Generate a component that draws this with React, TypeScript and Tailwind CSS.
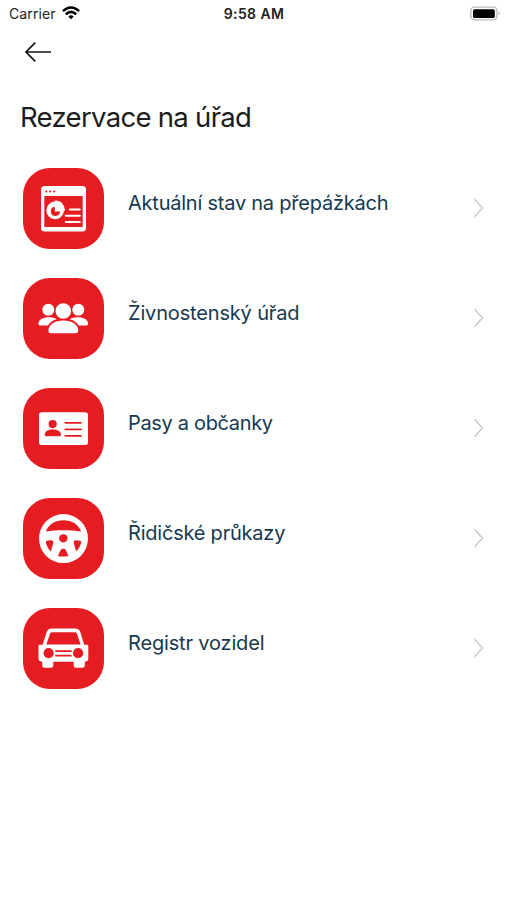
import React from 'react';

const WindowIcon = () => (
  <>
    <rect x="18" y="18" width="45" height="45.5" rx="3.5" fill="#fff" />
    <rect x="21.3" y="28" width="38.4" height="31" fill="#e51d23" />
    <g fill="#e51d23">
      <circle cx="23.2" cy="23.5" r="1.1" />
      <circle cx="27.2" cy="23.5" r="1.1" />
      <circle cx="31.2" cy="23.5" r="1.1" />
    </g>
    <path d="M31.6 33.6 Q31.8 32.4 33 32.5 Q36.5 33 38.5 34.5 Q41.3 37.5 41.9 41.5 Q42 43 40.9 43.2 A8.8 8.8 0 1 1 31.6 33.6 Z" fill="#fff" />
    <path d="M31.8 38.8 V43.6 H37 A4.6 4.6 0 1 1 31.8 38.8 Z" fill="#e51d23" />
    <path d="M46.8 41.5 H56.8 M42.8 47.8 H56.8 M42.8 54 H56.8" stroke="#fff" strokeWidth="2" strokeLinecap="round" />
  </>
);

const PeopleIcon = () => (
  <g fill="#fff">
    <circle cx="25.3" cy="31.8" r="6" />
    <circle cx="55.3" cy="31.8" r="6" />
    <path d="M15.4 45.5 C15.6 41.5 20 39.2 25.5 39.2 C29 39.2 31.8 39.8 33.8 41.2 C29.5 42.3 26.5 44.5 25 47.4 H17 Q15.4 47.4 15.4 45.5 Z" />
    <path d="M65.2 45.5 C65 41.5 60.6 39.2 55.1 39.2 C51.6 39.2 48.8 39.8 46.8 41.2 C51.1 42.3 54.1 44.5 55.6 47.4 H63.6 Q65.2 47.4 65.2 45.5 Z" />
    <circle cx="40.3" cy="33" r="7.8" />
    <path d="M25.4 52.8 C25.4 46.5 32 42.5 40.3 42.5 S55.2 46.5 55.2 52.8 Q55.2 55.3 52.8 55.3 H27.8 Q25.4 55.3 25.4 52.8 Z" />
  </g>
);

const CardIcon = () => (
  <>
    <rect x="16" y="24.3" width="49" height="32.7" rx="2.8" fill="#fff" />
    <g fill="#e51d23">
      <circle cx="29.7" cy="36.1" r="4.1" />
      <path d="M21.7 46.8 C21.7 43.2 25.3 41.4 29.8 41.4 S38 43.2 38 46.8 Q38 48.2 36.6 48.2 H23.1 Q21.7 48.2 21.7 46.8 Z" />
    </g>
    <path d="M42.3 34.8 H58 M42.3 41.4 H58 M42.3 47.9 H58" stroke="#e51d23" strokeWidth="1.7" strokeLinecap="round" />
  </>
);

const WheelIcon = () => (
  <>
    <circle cx="40.5" cy="40.6" r="24.5" fill="#fff" />
    <g fill="#e51d23">
      <path d="M22.8 33.6 C25.2 26.6 32 22.2 40.5 22.2 S55.8 26.6 58.2 33.6 C47 31.8 34 31.8 22.8 33.6 Z" />
      <circle cx="40.3" cy="40.3" r="4.1" />
      <path d="M22.6 43.6 Q26 41.6 29.2 42.4 Q31 43 30.2 45.2 L27.8 53.6 Q23.6 49.5 22.6 43.6 Z" />
      <path d="M58.4 43.6 Q55 41.6 51.8 42.4 Q50 43 50.8 45.2 L53.2 53.6 Q57.4 49.5 58.4 43.6 Z" />
      <path d="M34.9 58 L37.6 52 Q38.3 50.7 40.2 50.7 Q42.2 50.7 42.8 52 L45.5 58 Q40.2 59 34.9 58 Z" />
    </g>
  </>
);

const CarIcon = () => (
  <>
    <path d="M28.6 20.5 H52.4 Q56.2 20.5 57.3 24 L61.2 36.8 H64 Q65.3 36.8 65.3 38.2 V51 Q65.3 53.4 62.8 53.6 L61.8 53.7 V57.3 Q61.8 59.8 59.3 59.8 H53.2 Q50.7 59.8 50.7 57.3 V53.7 H30.3 V57.3 Q30.3 59.8 27.8 59.8 H21.7 Q19.2 59.8 19.2 57.3 V53.7 L18 53.6 Q15.5 53.4 15.5 51 V38.2 Q15.5 36.8 16.8 36.8 H19.6 L23.7 24 Q24.8 20.5 28.6 20.5 Z" fill="#fff" />
    <path d="M29.2 24.2 H51.8 Q53.4 24.2 53.9 25.6 L57.6 36.6 H23.4 L27.1 25.6 Q27.6 24.2 29.2 24.2 Z" fill="#e51d23" />
    <circle cx="25.6" cy="45.2" r="5.1" fill="#e51d23" />
    <circle cx="55.1" cy="45.2" r="5.1" fill="#e51d23" />
    <path d="M32.3 43.1 H48.6 M32.3 47.7 H48.6" stroke="#e51d23" strokeWidth="1.8" />
  </>
);

const items = [
  { label: 'Aktuální stav na přepážkách', icon: <WindowIcon />, spacing: 'tracking-[-0.23px]' },
  { label: 'Živnostenský úřad', icon: <PeopleIcon />, spacing: 'tracking-[-0.16px]' },
  { label: 'Pasy a občanky', icon: <CardIcon />, spacing: 'tracking-[-0.33px]' },
  { label: 'Řidičské průkazy', icon: <WheelIcon />, spacing: 'tracking-[-0.22px]' },
  { label: 'Registr vozidel', icon: <CarIcon />, spacing: 'tracking-[-0.16px]' },
];

const StatusBar = () => (
  <div className="grid h-7 grid-cols-3 items-center pl-[9px] pr-[6px] text-[14px] text-[#222]">
    <div className="flex items-center gap-[6px] pb-[2px]">
      <span className="tracking-[0.1px]">Carrier</span>
      <svg className="h-[14px] w-[18px]" viewBox="0 0 18 14" fill="none" stroke="#000" strokeWidth="2.5">
        <path d="M.9 5.1 Q9 -2 17.1 5.1" />
        <path d="M3.8 8.2 Q9 3.6 14.2 8.2" />
        <path d="M6.3 10.5 Q9 8.2 11.7 10.5 L9 13.3 Z" fill="#000" stroke="none" />
      </svg>
    </div>
    <span className="pb-[2px] pr-[2px] text-center font-semibold tracking-[0.4px]">9:58 AM</span>
    <svg className="mb-[2px] h-[15px] w-[31px] justify-self-end" viewBox="0 0 31 15">
      <rect x=".8" y="1.1" width="26.2" height="12.8" rx="3.8" fill="#fff" stroke="#bbb" strokeWidth="1.4" />
      <rect x="3" y="3.2" width="21.8" height="8.8" rx="1.5" fill="#000" />
      <path d="M28.6 5.4 Q31 7.5 28.6 9.6 Z" fill="#aaa" />
    </svg>
  </div>
);

const App = () => {
  return (
    <main className="min-h-screen overflow-hidden bg-white font-['Inter',sans-serif]">
      <StatusBar />

      {/* Back */}
      <button className="ml-6 mt-3 block" aria-label="Back">
        <svg className="h-6 w-7" viewBox="0 0 28 24" fill="none" stroke="#111" strokeWidth="1.6">
          <path d="M27 12 H2 M11.3 2.6 L1.9 12 L11.3 21.4" />
        </svg>
      </button>

      <h1 className="ml-[20px] mt-[33px] whitespace-nowrap text-[27.5px] leading-10 tracking-[-0.7px] text-[#1c1c1e]">
        Rezervace na úřad
      </h1>

      <ul className="mt-[30.5px] flex flex-col gap-[29px] pl-[23px] pr-[22px]">
        {items.map((item) => (
          <li key={item.label} className="flex h-[81px] items-center">
            <div className="size-[81px] shrink-0 overflow-hidden rounded-[27px] bg-[#e51d23]">
              <svg className="size-full" viewBox="0 0 81 81" fill="none">
                {item.icon}
              </svg>
            </div>
            <span className={`mb-[10px] ml-6 grow whitespace-nowrap text-[20px] leading-7 text-[#163851] ${item.spacing}`}>
              {item.label}
            </span>
            <svg className="h-5 w-3" viewBox="0 0 12 20" fill="none" stroke="#c4c4c6" strokeWidth="1.3">
              <path d="M1.5 1.2 L9.5 10 L1.5 18.8" />
            </svg>
          </li>
        ))}
      </ul>
    </main>
  );
};

export default App;
